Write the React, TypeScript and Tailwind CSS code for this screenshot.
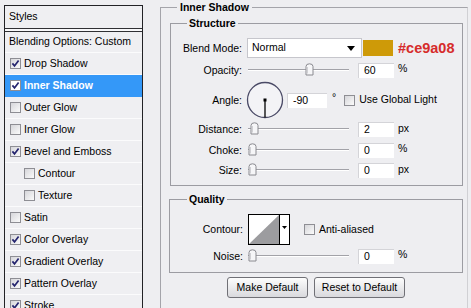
import React from "react";

const FONT = { fontFamily: '"Liberation Sans", Arial, sans-serif' };

function Check({ checked, white }: { checked: boolean; white?: boolean }) {
  return (
    <div
      className={`w-[11px] h-[11px] shrink-0 border border-[#8e8e94] flex items-center justify-center ${
        white ? "bg-white" : "bg-linear-to-br from-[#d6d6da] to-[#fbfbfb]"
      }`}
    >
      {checked && (
        <svg width="9" height="9" viewBox="0 0 9 9">
          <path d="M1.4 4.4 L3.5 6.9 L7.6 1.4" fill="none" stroke="#24246e" strokeWidth="1.7" />
        </svg>
      )}
    </div>
  );
}

function Thumb() {
  return (
    <svg width="9" height="13" viewBox="0 0 9 13">
      <path
        d="M1 3.5 Q1 0.8 4.5 0.8 Q8 0.8 8 3.5 V12 H1 Z"
        fill="#f6f6f8"
        stroke="#8a8a90"
        strokeWidth="1"
      />
      <path d="M2.5 4 V10.5" stroke="#d0d0d4" strokeWidth="1" />
    </svg>
  );
}

function Slider({ pos }: { pos: number }) {
  return (
    <div className="relative h-[14px] w-[101px] shrink-0 flex flex-col justify-center">
      <div className="h-[1px] bg-[#a2a2a8]" />
      <div className="h-[1px] bg-white" />
      <div className="absolute top-0" style={{ left: pos }}>
        <Thumb />
      </div>
    </div>
  );
}

function NumInput({ value, w = 36 }: { value: string; w?: number }) {
  return (
    <div
      className="h-[15px] bg-white border-t border-l border-[#d4d4d8] pl-[5px] flex items-center text-[10.5px] leading-none shrink-0"
      style={{ width: w }}
    >
      {value}
    </div>
  );
}

function Label({ children }: { children: React.ReactNode }) {
  return <div className="w-[71px] shrink-0 text-right text-[10.5px] leading-none">{children}</div>;
}

const rows = [
  { label: "Drop Shadow", c: true },
  { label: "Inner Shadow", c: true, active: true },
  { label: "Outer Glow", c: false },
  { label: "Inner Glow", c: false },
  { label: "Bevel and Emboss", c: true },
  { label: "Contour", c: false, indent: true },
  { label: "Texture", c: false, indent: true },
  { label: "Satin", c: false },
  { label: "Color Overlay", c: true },
  { label: "Gradient Overlay", c: true },
  { label: "Pattern Overlay", c: true },
  { label: "Stroke", c: true },
];

export default function App() {
  return (
    <div
      className="w-[471px] h-[308px] overflow-hidden bg-[#eeeef1] flex text-black"
      style={FONT}
    >
      {/* Left styles list */}
      <div className="ml-[4px] mt-[5px] w-[139px] shrink-0 self-start border-l border-r border-t border-[#222226] bg-[#efeff2]">
        <div className="h-[23px] flex items-center pl-[4px] text-[10.5px] border-b border-[#303034]">Styles</div>
        <div className="h-[2px] bg-[#f8f8fa]" />
        <div className="h-[22px] flex items-center pl-[4px] text-[10.5px] border-t border-[#303034] border-b border-b-[#fbfbfc]">
          Blending Options: Custom
        </div>
        {rows.map((r) => (
          <div
            key={r.label}
            className={`h-[22px] flex items-center gap-[3px] border-b ${
              r.active ? "bg-[#3498f8] border-[#3498f8] text-white font-bold" : "border-[#fbfbfc]"
            } ${r.indent ? "pl-[19px]" : "pl-[5px]"} text-[10.5px]`}
          >
            <Check checked={r.c} white={r.active} />
            <span>{r.label}</span>
          </div>
        ))}
      </div>

      {/* Right panel */}
      <div className="pl-[17px] pt-[7px] shrink-0">
        <div className="w-[308px] h-[320px] border border-[#a4a4aa] border-r-[#d0d0d4]">
          <div className="-mt-[7px] ml-[16px] px-[3px] w-fit bg-[#eeeef1] font-bold text-[10.5px] leading-[13px]">
            Inner Shadow
          </div>

          {/* Structure */}
          <div className="ml-[9px] mt-[9px] w-[293px] h-[163px] border border-[#9c9ca2]">
            <div className="-mt-[7px] ml-[16px] px-[2px] w-fit bg-[#eeeef1] font-bold text-[10.5px] leading-[13px]">
              Structure
            </div>

            {/* Blend mode */}
            <div className="mt-[8px] h-[20px] flex items-center">
              <Label>Blend Mode:</Label>
              <div className="ml-[5px] w-[115px] h-[20px] bg-white border border-[#c6c6cc] flex items-center justify-between pl-[4px] pr-[6px] text-[10.5px]">
                <span>Normal</span>
                <svg width="8" height="5" viewBox="0 0 8 5">
                  <path d="M0 0 H8 L4 5 Z" fill="#000" />
                </svg>
              </div>
              <div className="ml-[1px] w-[30px] h-[16px] bg-[#ce9a08]" />
              <div className="ml-[5px] text-[14.5px] font-bold text-[#d62b2b] leading-none">#ce9a08</div>
            </div>

            {/* Opacity */}
            <div className="mt-[3px] h-[18px] flex items-center">
              <Label>Opacity:</Label>
              <div className="ml-[6px]">
                <Slider pos={57} />
              </div>
              <div className="ml-[9px]">
                <NumInput value="60" />
              </div>
              <div className="ml-[4px] text-[10.5px] leading-none -mt-[4px]">%</div>
            </div>

            {/* Angle */}
            <div className="mt-[2px] h-[38px] flex items-center">
              <Label>Angle:</Label>
              <svg className="ml-[4px] shrink-0" width="38" height="38" viewBox="0 0 38 38">
                <circle cx="19" cy="19" r="17.5" fill="#f3f3f6" stroke="#4a4a66" strokeWidth="1.3" />
                <line x1="19" y1="19" x2="19" y2="36.5" stroke="#000" strokeWidth="1.3" />
                <rect x="17.5" y="17.5" width="3" height="3" fill="#000" />
              </svg>
              <div className="ml-[3px]">
                <NumInput value="-90" w={40} />
              </div>
              <div className="ml-[5px] text-[10.5px] leading-none -mt-[6px]">°</div>
              <div className="ml-[8px] flex items-center gap-[4px] text-[10.5px]">
                <Check checked={false} />
                <span>Use Global Light</span>
              </div>
            </div>

            {/* Distance */}
            <div className="mt-[2px] h-[16px] flex items-center">
              <Label>Distance:</Label>
              <div className="ml-[6px]">
                <Slider pos={2} />
              </div>
              <div className="ml-[9px]">
                <NumInput value="2" />
              </div>
              <div className="ml-[4px] text-[10.5px] leading-none -mt-[2px]">px</div>
            </div>

            {/* Choke */}
            <div className="mt-[5px] h-[16px] flex items-center">
              <Label>Choke:</Label>
              <div className="ml-[6px]">
                <Slider pos={0} />
              </div>
              <div className="ml-[9px]">
                <NumInput value="0" />
              </div>
              <div className="ml-[4px] text-[10.5px] leading-none -mt-[4px]">%</div>
            </div>

            {/* Size */}
            <div className="mt-[4px] h-[16px] flex items-center">
              <Label>Size:</Label>
              <div className="ml-[6px]">
                <Slider pos={0} />
              </div>
              <div className="ml-[9px]">
                <NumInput value="0" />
              </div>
              <div className="ml-[4px] text-[10.5px] leading-none -mt-[2px]">px</div>
            </div>
          </div>

          {/* Quality */}
          <div className="ml-[8px] mt-[13px] w-[294px] h-[74px] border border-[#9c9ca2]">
            <div className="-mt-[7px] ml-[17px] px-[2px] w-fit bg-[#eeeef1] font-bold text-[10.5px] leading-[13px]">
              Quality
            </div>

            <div className="mt-[8px] h-[31px] flex items-center">
              <div className="w-[73px] shrink-0 text-right text-[10.5px] leading-none">Contour:</div>
              <svg className="ml-[5px] shrink-0" width="42" height="31" viewBox="0 0 42 31">
                <rect x="0.5" y="0.5" width="41" height="30" fill="#fff" stroke="#000" />
                <path d="M1 30 L31 1 V30 Z" fill="#9c9c9f" />
                <line x1="31.5" y1="1" x2="31.5" y2="30" stroke="#000" />
                <path d="M34 12 H39 L36.5 15 Z" fill="#000" />
              </svg>
              <div className="ml-[14px] flex items-center gap-[4px] text-[10.5px]">
                <Check checked={false} />
                <span>Anti-aliased</span>
              </div>
            </div>

            <div className="mt-[3px] h-[16px] flex items-center">
              <div className="w-[73px] shrink-0 text-right text-[10.5px] leading-none">Noise:</div>
              <div className="ml-[5px]">
                <Slider pos={0} />
              </div>
              <div className="ml-[9px]">
                <NumInput value="0" />
              </div>
              <div className="ml-[4px] text-[10.5px] leading-none -mt-[4px]">%</div>
            </div>
          </div>

          {/* Buttons */}
          <div className="mt-[4px] ml-[66px] flex gap-[6px]">
            <div className="w-[81px] h-[21px] rounded-[3px] border border-[#707076] bg-linear-to-b from-[#fdfdfd] to-[#d9d9dd] flex items-center justify-center text-[10.5px]">
              Make Default
            </div>
            <div className="w-[91px] h-[21px] rounded-[3px] border border-[#707076] bg-linear-to-b from-[#fdfdfd] to-[#d9d9dd] flex items-center justify-center text-[10.5px]">
              Reset to Default
            </div>
          </div>
        </div>
      </div>
    </div>
  );
}
